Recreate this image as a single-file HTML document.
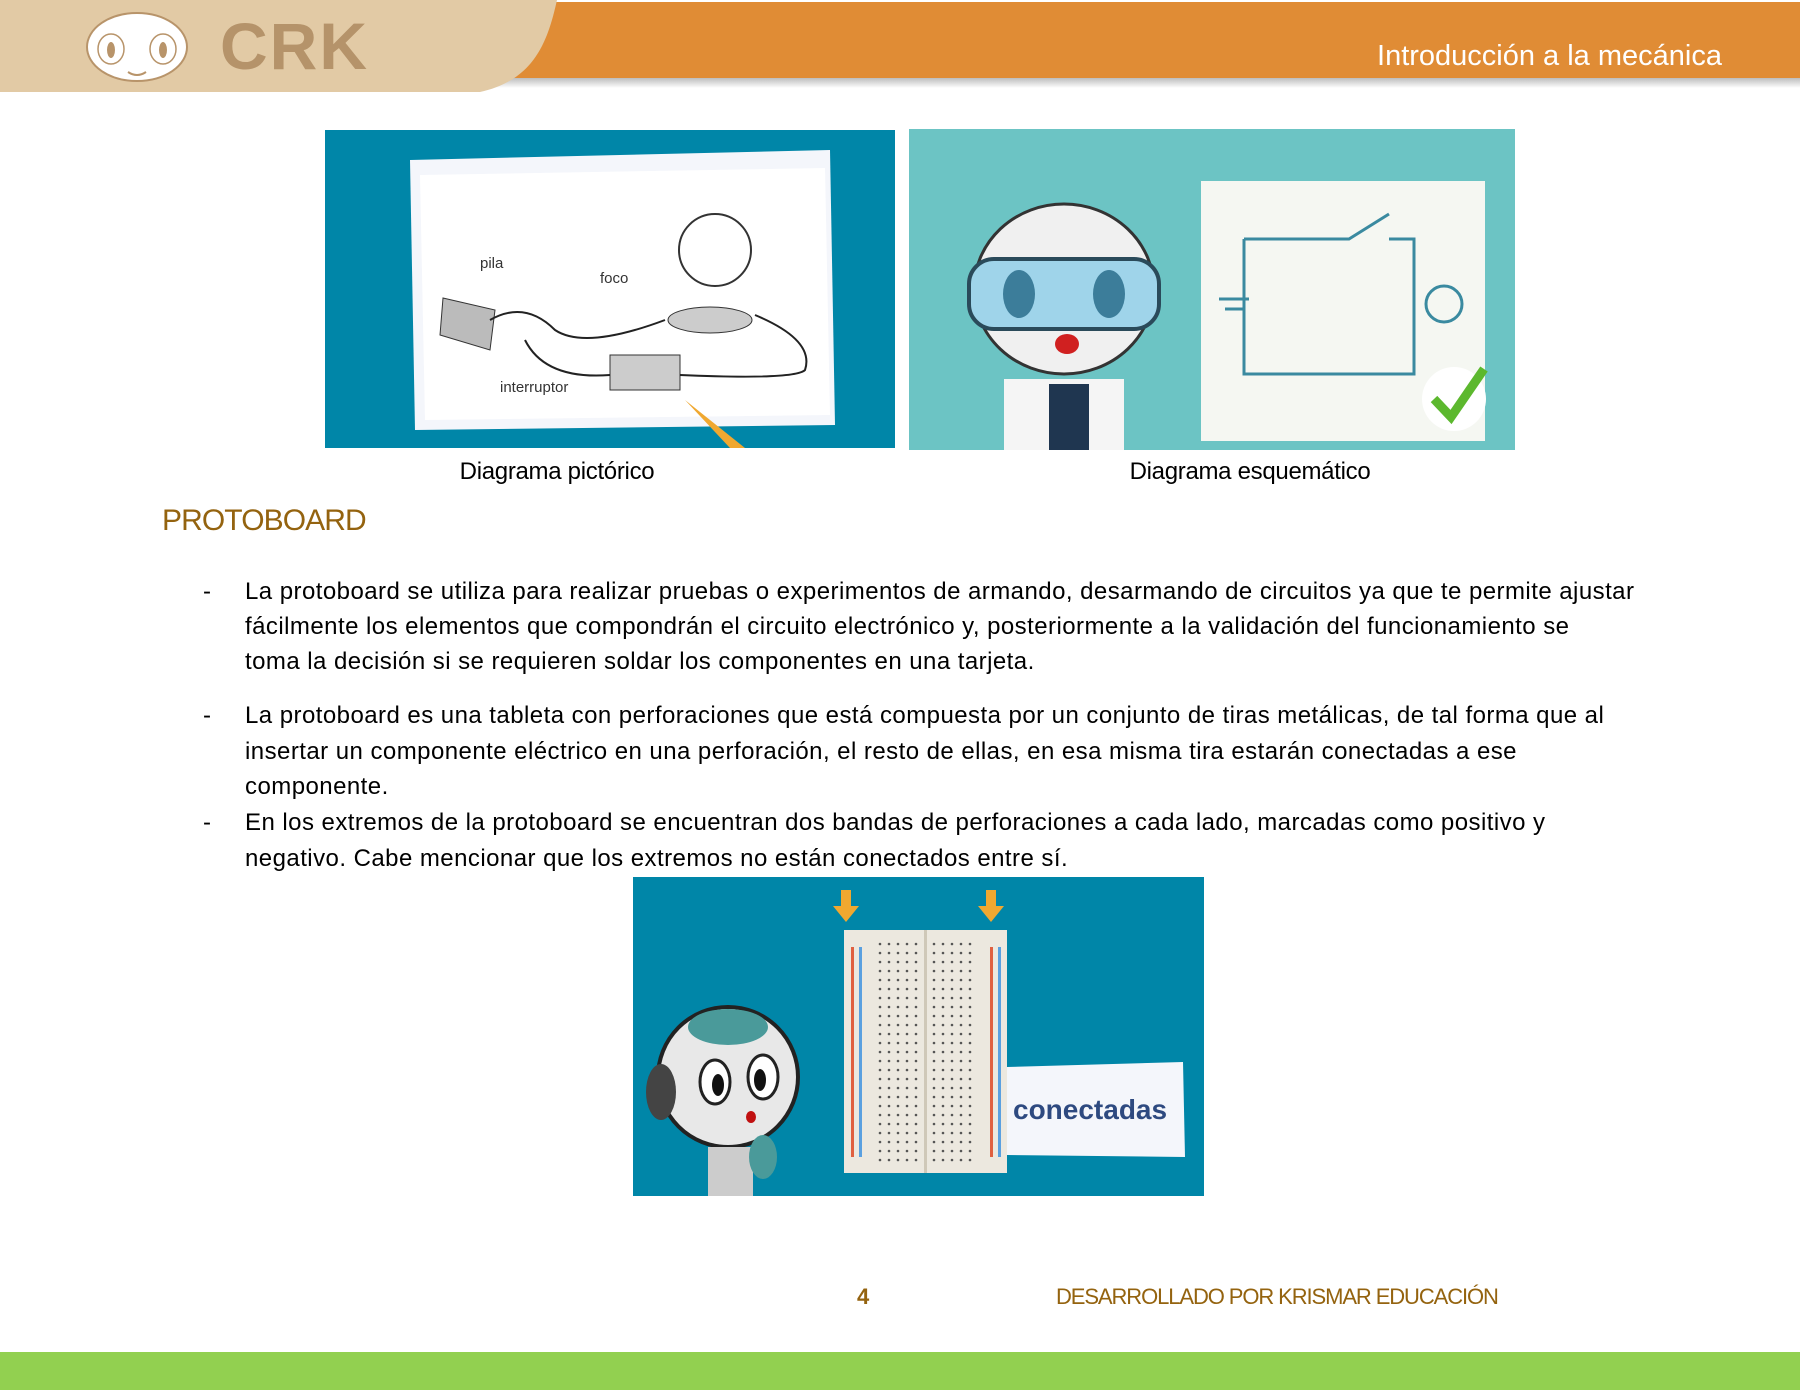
<!DOCTYPE html>
<html><head><meta charset="utf-8"><style>
*{margin:0;padding:0;box-sizing:border-box}
body{width:1800px;height:1390px;position:relative;background:#fff;font-family:"Liberation Sans",sans-serif;overflow:hidden;color:#000}
.abs{position:absolute}
.ln{position:absolute;left:245px;font-size:24px;letter-spacing:0.45px;white-space:nowrap;line-height:28px}
.dash{position:absolute;left:203px;font-size:24px}
</style></head><body>
<!-- header -->
<div class="abs" style="left:0;top:2px;width:1800px;height:76px;background:#e08c35"></div>
<div class="abs" style="left:0;top:78px;width:1800px;height:10px;background:linear-gradient(#bdbdbd,#fff)"></div>
<svg class="abs" style="left:0;top:0" width="600" height="95"><path d="M0 0 H557 C548 40 535 80 480 92 H0 Z" fill="#e2caa5"/></svg>
<svg class="abs" style="left:78px;top:10px" width="118" height="74" viewBox="0 0 118 74">
<ellipse cx="59" cy="37" rx="50" ry="34" fill="#fff" stroke="#b8946a" stroke-width="2"/>
<ellipse cx="33" cy="39" rx="13" ry="15" fill="none" stroke="#b8946a" stroke-width="1.5"/>
<ellipse cx="85" cy="39" rx="13" ry="15" fill="none" stroke="#b8946a" stroke-width="1.5"/>
<ellipse cx="33" cy="40" rx="4" ry="8" fill="#b8946a"/><ellipse cx="85" cy="40" rx="4" ry="8" fill="#b8946a"/>
<path d="M50 62 Q59 68 68 62" stroke="#b8946a" stroke-width="2" fill="none"/>
</svg>
<div class="abs" style="left:220px;top:8px;font-size:66px;font-weight:bold;color:#b5936a;letter-spacing:2px">CRK</div>
<div class="abs" style="right:78px;top:40px;font-size:29px;color:#fff">Introducción a la mecánica</div>

<!-- image 1 -->
<svg class="abs" style="left:325px;top:130px" width="570" height="318">
<rect width="570" height="318" fill="#0086a8"/>
<path d="M85 30 L505 20 L510 295 L90 300 Z" fill="#f4f6fb"/>
<path d="M95 45 L500 38 L505 285 L100 290 Z" fill="#fff"/>
<circle cx="390" cy="120" r="36" fill="none" stroke="#333" stroke-width="2"/>
<ellipse cx="385" cy="190" rx="42" ry="13" fill="#ccc" stroke="#333"/>
<path d="M118 168 L170 180 L165 220 L115 205 Z" fill="#bbb" stroke="#333"/>
<rect x="285" y="225" width="70" height="35" fill="#ccc" stroke="#333"/>
<path d="M165 190 Q200 170 230 200 Q260 220 340 190 M430 185 Q490 210 480 240 Q470 250 355 245 M285 245 Q220 250 200 210" fill="none" stroke="#222" stroke-width="2"/>
<text x="155" y="138" font-size="15" fill="#333" font-family="Liberation Sans">pila</text>
<text x="275" y="153" font-size="15" fill="#333" font-family="Liberation Sans">foco</text>
<text x="175" y="262" font-size="15" fill="#333" font-family="Liberation Sans">interruptor</text>
<path d="M360 270 L420 318 L405 318 Z" fill="#f0a830"/>
</svg>
<!-- image 2 -->
<svg class="abs" style="left:909px;top:129px" width="606" height="321">
<rect width="606" height="321" fill="#6cc4c4"/>
<rect x="292" y="52" width="284" height="260" fill="#f5f7f2"/>
<path d="M335 110 V245 H505 V110 H480 M335 110 H440 L480 85" fill="none" stroke="#3a8aa0" stroke-width="3"/>
<circle cx="535" cy="175" r="18" fill="none" stroke="#3a8aa0" stroke-width="3"/>
<path d="M310 170 H340 M316 180 H334" stroke="#3a8aa0" stroke-width="3"/>
<circle cx="545" cy="270" r="32" fill="#fff"/><path d="M525 270 L542 288 L575 240" stroke="#5cb82e" stroke-width="9" fill="none"/>
<ellipse cx="155" cy="160" rx="90" ry="85" fill="#f0f0f0" stroke="#333" stroke-width="3"/>
<rect x="60" y="130" width="190" height="70" rx="25" fill="#9fd4ea" stroke="#2a4a5a" stroke-width="4"/>
<ellipse cx="110" cy="165" rx="16" ry="24" fill="#3c7d9a"/><ellipse cx="200" cy="165" rx="16" ry="24" fill="#3c7d9a"/>
<ellipse cx="158" cy="215" rx="12" ry="10" fill="#d02020"/>
<rect x="95" y="250" width="120" height="71" fill="#f5f5f5"/><rect x="140" y="255" width="40" height="66" fill="#1f3650"/>
</svg>
<div class="abs" style="left:452px;top:458px;font-size:24px;width:210px;text-align:center;letter-spacing:-0.3px">Diagrama pictórico</div>
<div class="abs" style="left:1120px;top:458px;font-size:24px;width:260px;text-align:center;letter-spacing:-0.3px">Diagrama esquemático</div>

<div class="abs" style="left:162px;top:504px;font-size:30px;color:#94630f;letter-spacing:-0.9px">PROTOBOARD</div>

<div class="dash" style="top:578px">-</div>
<div class="ln" style="top:578px">La protoboard se utiliza para realizar pruebas o experimentos de armando, desarmando de circuitos ya que te permite ajustar</div>
<div class="ln" style="top:613px">fácilmente los elementos que compondrán el circuito electrónico y, posteriormente a la validación del funcionamiento se</div>
<div class="ln" style="top:648px">toma la decisión si se requieren soldar los componentes en una tarjeta.</div>
<div class="dash" style="top:702px">-</div>
<div class="ln" style="top:702px">La protoboard es una tableta con perforaciones que está compuesta por un conjunto de tiras metálicas, de tal forma que al</div>
<div class="ln" style="top:738px">insertar un componente eléctrico en una perforación, el resto de ellas, en esa misma tira estarán conectadas a ese</div>
<div class="ln" style="top:773px">componente.</div>
<div class="dash" style="top:809px">-</div>
<div class="ln" style="top:809px">En los extremos de la protoboard se encuentran dos bandas de perforaciones a cada lado, marcadas como positivo y</div>
<div class="ln" style="top:845px">negativo. Cabe mencionar que los extremos no están conectados entre sí.</div>

<!-- image 3 -->
<svg class="abs" style="left:633px;top:877px" width="571" height="319">
<defs><pattern id="h" width="9" height="9" patternUnits="userSpaceOnUse"><circle cx="4" cy="4" r="1.3" fill="#555"/></pattern></defs>
<rect width="571" height="319" fill="#0086a8"/>
<path d="M208 13 h10 v16 h8 l-13 16 l-13 -16 h8z" fill="#f0a830"/>
<path d="M353 13 h10 v16 h8 l-13 16 l-13 -16 h8z" fill="#f0a830"/>
<rect x="211" y="53" width="163" height="243" fill="#ece8df"/>
<rect x="218" y="70" width="3" height="210" fill="#e06040"/><rect x="226" y="70" width="3" height="210" fill="#5aa0e0"/>
<rect x="357" y="70" width="3" height="210" fill="#e06040"/><rect x="365" y="70" width="3" height="210" fill="#5aa0e0"/>
<rect x="243" y="65" width="45" height="220" fill="url(#h)"/><rect x="297" y="65" width="45" height="220" fill="url(#h)"/>
<rect x="291" y="53" width="3" height="243" fill="#cfc8b8"/>
<path d="M374 190 L550 185 L552 280 L374 278 Z" fill="#f4f6fb"/>
<text x="380" y="242" font-size="28" fill="#2e4a80" font-family="Liberation Sans" font-weight="bold">conectadas</text>
<ellipse cx="95" cy="200" rx="70" ry="70" fill="#e8e8e8" stroke="#222" stroke-width="4"/>
<ellipse cx="28" cy="215" rx="15" ry="28" fill="#444"/>
<ellipse cx="95" cy="150" rx="40" ry="18" fill="#4a9a9a"/>
<ellipse cx="82" cy="205" rx="15" ry="22" fill="#fff" stroke="#222" stroke-width="3"/><ellipse cx="130" cy="200" rx="15" ry="22" fill="#fff" stroke="#222" stroke-width="3"/>
<ellipse cx="85" cy="208" rx="6" ry="11" fill="#111"/><ellipse cx="127" cy="203" rx="6" ry="11" fill="#111"/>
<ellipse cx="118" cy="240" rx="5" ry="6" fill="#c01010"/>
<rect x="75" y="270" width="45" height="49" fill="#ccc"/><ellipse cx="130" cy="280" rx="14" ry="22" fill="#4a9a9a"/>
</svg>

<div class="abs" style="left:857px;top:1284px;font-size:22px;font-weight:bold;color:#94630f">4</div>
<div class="abs" style="left:1056px;top:1284px;font-size:22px;color:#94630f;letter-spacing:-1.1px;white-space:nowrap">DESARROLLADO POR KRISMAR EDUCACIÓN</div>
<div class="abs" style="left:0;top:1352px;width:1800px;height:38px;background:#92d050"></div>
</body></html>
